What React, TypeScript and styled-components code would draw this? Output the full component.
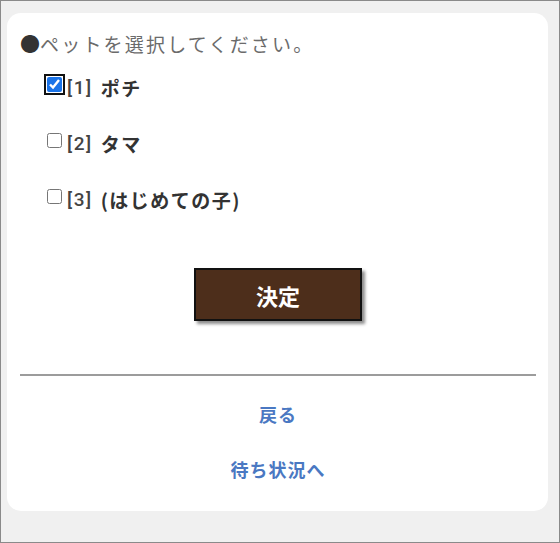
import { useState } from 'react'
import styled, { createGlobalStyle } from 'styled-components'

const Global = createGlobalStyle`
  html, body { margin: 0; padding: 0; }
  body {
    font-family: "Noto Sans CJK JP", "Noto Sans", sans-serif;
    background: #f0f0f0;
  }
`

/* ---------------- UI ---------------- */

const Frame = styled.div`
  box-sizing: border-box;
  width: 560px; height: 543px;
  border: 1px solid #8a8a8a;
  background: #f0f0f0;
  padding: 12px 11px 31px 6px;
`
const Card = styled.section`
  box-sizing: border-box;
  height: 100%;
  background: #fff;
  border-radius: 14px;
  padding: 18px 12px 0 13px;
  display: flex; flex-direction: column;
`
const Prompt = styled.p`
  margin: 0; font-size: 19px; line-height: 26px;
  color: #6b6b6b; letter-spacing: 2.2px;
`
const Dot = styled.span`
  color: #333; font-size: 20px; letter-spacing: 0;
`
const List = styled.div`
  display: grid; gap: 30px;
  margin: 17px 0 0 27px;
`
const Option = styled.label`
  display: flex; align-items: center; gap: 5px;
  height: 26px; font-size: 19px; color: #333;
  cursor: pointer;
`
const Box = styled.input<{ $focus?: boolean }>`
  width: 15px; height: 15px; margin: 0 0 6px 0;
  accent-color: #1a73e8;
  ${({ $focus }) => $focus ? 'outline: 2px solid #111; outline-offset: 1px; border-radius: 3px;' : ''}
`
const Num = styled.span`
  font-family: Roboto, "Noto Sans CJK JP", sans-serif;
  font-weight: 500; color: #444; letter-spacing: 1.5px;
`
const Name = styled.span`
  font-weight: 700; margin-left: 3px; letter-spacing: 1.5px;
`
const ButtonRow = styled.div`
  display: flex; justify-content: center;
  margin-top: 56px;
`
const Submit = styled.button`
  box-sizing: border-box;
  width: 168px; height: 53px;
  background: #4d2e1b; color: #fff;
  border: 2px solid #111;
  box-shadow: 3px 3px 3px rgba(0,0,0,.45);
  font-family: "Noto Sans CJK JP", sans-serif;
  font-size: 22px; font-weight: 700;
  cursor: pointer;
`
const Rule = styled.hr`
  margin: 53px 0 0 0; border: 0;
  border-top: 2px solid #9c9c9c;
`
const Links = styled.nav`
  display: grid; justify-items: center; gap: 30px;
  margin-top: 26px;
`
const Link = styled.a`
  font-size: 18px; line-height: 25px; font-weight: 700;
  color: #4a78c2; text-decoration: none;
  letter-spacing: 1px;
`

/* ----------- page component ---------- */

const pets = [
  { id: 1, name: 'ポチ' },
  { id: 2, name: 'タマ' },
  { id: 3, name: '(はじめての子)' },
]

export default function App() {
  const [picked, setPicked] = useState<number[]>([1])

  const toggle = (id: number) =>
    setPicked(p => p.includes(id) ? p.filter(x => x !== id) : [...p, id])

  return (
    <>
      <Global />
      <Frame>
        <Card>
          <Prompt><Dot>●</Dot>ペットを選択してください。</Prompt>
          <List>
            {pets.map(p => (
              <Option key={p.id}>
                <Box
                  type="checkbox"
                  $focus={p.id === 1}
                  checked={picked.includes(p.id)}
                  onChange={() => toggle(p.id)}
                />
                <Num>[{p.id}]</Num>
                <Name>{p.name}</Name>
              </Option>
            ))}
          </List>
          <ButtonRow>
            <Submit>決定</Submit>
          </ButtonRow>
          <Rule />
          <Links>
            <Link href="#">戻る</Link>
            <Link href="#">待ち状況へ</Link>
          </Links>
        </Card>
      </Frame>
    </>
  )
}
